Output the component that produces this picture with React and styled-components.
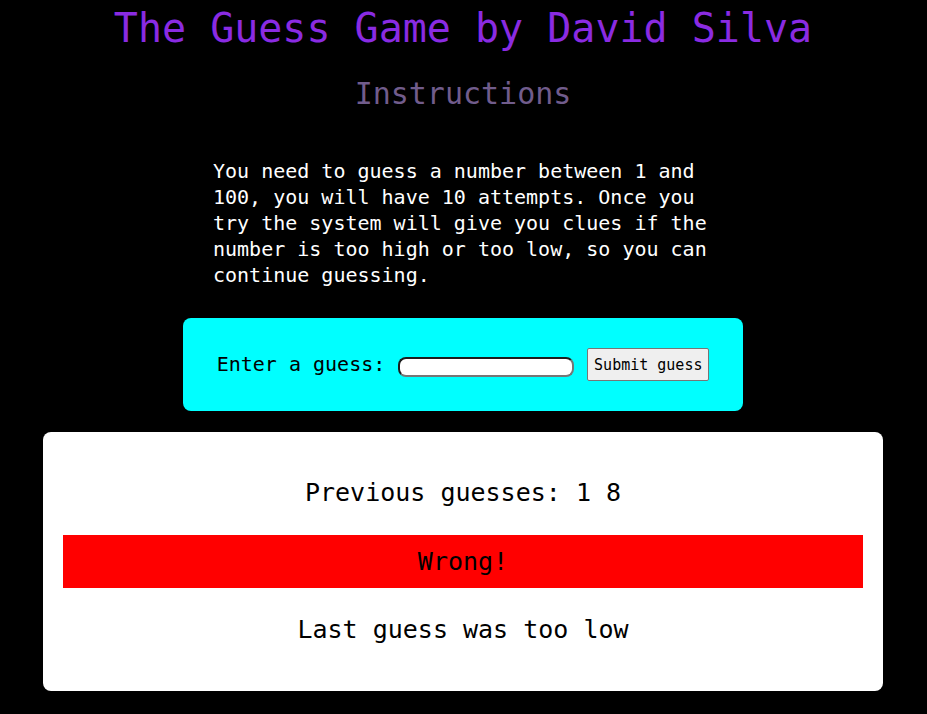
import React from 'react';
import styled, { createGlobalStyle } from 'styled-components';

const GlobalStyle = createGlobalStyle`
    html, body {
        margin: 0;
        padding: 0;
        background: #000000;
        font-family: "DejaVu Sans Mono", "Liberation Mono", monospace;
    }
`;

const App = () => {
    const previous = [1, 8];

    return (
        <Wrapper>
            <GlobalStyle />
            <Title>The Guess Game by David Silva</Title>
            <SubTitle>Instructions</SubTitle>
            <Instructions>
                You need to guess a number between 1 and 100, you will have 10 attempts.
                Once you try the system will give you clues if the number is too high or
                too low, so you can continue guessing.
            </Instructions>

            <GuessForm onSubmit={(e) => e.preventDefault()}>
                <Label htmlFor="guessField">Enter a guess:</Label>
                <GuessInput id="guessField" type="text" />
                <SubmitButton type="submit">Submit guess</SubmitButton>
            </GuessForm>

            <ResultCard>
                <ResultText>Previous guesses: {previous.join(' ')}</ResultText>
                <Status $bg="#ff0000">Wrong!</Status>
                <ResultText>Last guess was too low</ResultText>
            </ResultCard>
        </Wrapper>
    );
};

export default App;

const Wrapper = styled.div`
    width: 100%;
    min-height: 100vh;
    display: flex;
    flex-direction: column;
    align-items: center;
    padding: 4px 1px 0 0;
    box-sizing: border-box;
`;

const Title = styled.h1`
    margin: 0;
    font-size: 40px;
    line-height: 48px;
    font-weight: normal;
    color: #8a2be2;
    text-align: center;
`;

const SubTitle = styled.h2`
    margin: 24px 0 0;
    font-size: 30px;
    line-height: 36px;
    font-weight: normal;
    color: #715c8c;
    text-align: center;
`;

const Instructions = styled.p`
    width: 500px;
    margin: 46px 0 0;
    font-size: 20px;
    line-height: 26px;
    color: #ffffff;
`;

const GuessForm = styled.form`
    width: 560px;
    height: 93px;
    margin-top: 30px;
    background: #00ffff;
    border-radius: 8px;
    display: flex;
    align-items: center;
    justify-content: center;
    gap: 13px;
    box-sizing: border-box;
`;

const Label = styled.label`
    font-size: 20px;
    color: #000000;
    white-space: nowrap;
    margin-top: -2px;
`;

const GuessInput = styled.input`
    width: 176px;
    height: 20px;
    box-sizing: border-box;
    margin-top: 4px;
    padding: 0 6px;
    background: #ffffff;
    border: 2px solid #767676;
    border-top-color: #1c1c1c;
    border-left-color: #1c1c1c;
    border-radius: 8px;
    outline: none;
`;

const SubmitButton = styled.button`
    width: 122px;
    height: 33px;
    padding: 0;
    background: #efefef;
    border: 1px solid #767676;
    border-radius: 2px;
    font-family: "DejaVu Sans Mono", "Liberation Mono", monospace;
    font-size: 15px;
    color: #000000;
`;

const ResultCard = styled.div`
    width: 840px;
    margin-top: 21px;
    margin-bottom: 20px;
    padding: 46px 20px;
    box-sizing: border-box;
    background: #ffffff;
    border-radius: 8px;
    display: flex;
    flex-direction: column;
    gap: 27px;
`;

const ResultText = styled.p`
    margin: 0;
    font-size: 25px;
    line-height: 30px;
    color: #000000;
    text-align: center;
`;

const Status = styled.div`
    height: 53px;
    display: flex;
    align-items: center;
    justify-content: center;
    background: ${(p) => p.$bg};
    font-size: 25px;
    color: #000000;
`;
